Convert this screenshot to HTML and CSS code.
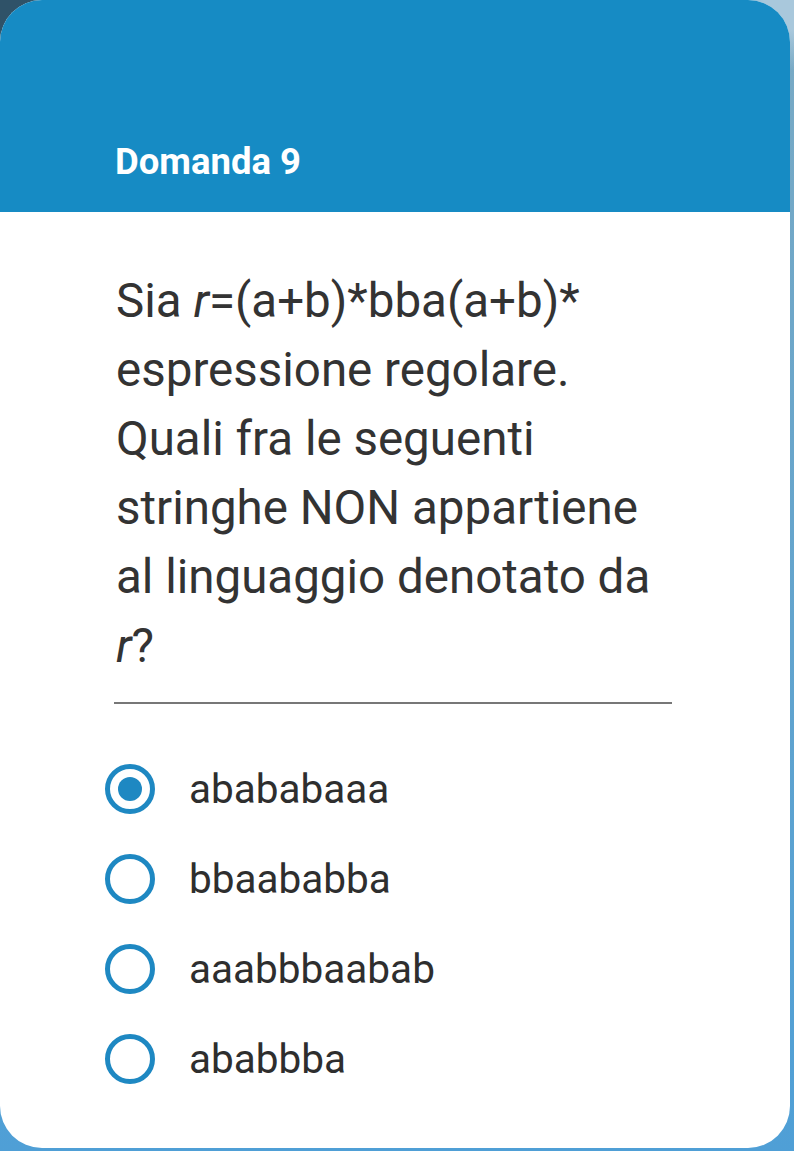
FILE: index.html
```html
<!DOCTYPE html>
<html lang="it">
<head>
<meta charset="utf-8">
<link rel="stylesheet" href="styles.css">
</head>
<body>
<div class="card">
  <div class="header"><h1 class="title">Domanda 9</h1></div>
  <div class="content">
    <p class="question">Sia <i>r</i>=(a+b)*bba(a+b)* espressione regolare. Quali fra le seguenti stringhe NON appartiene al linguaggio denotato da <i>r</i>?</p>
    <hr class="divider">
    <ul class="options">
      <li class="option"><span class="radio checked"></span><span class="label">abababaaa</span></li>
      <li class="option"><span class="radio"></span><span class="label">bbaababba</span></li>
      <li class="option"><span class="radio"></span><span class="label">aaabbbaabab</span></li>
      <li class="option"><span class="radio"></span><span class="label">ababbba</span></li>
    </ul>
  </div>
</div>
</body>
</html>
```
FILE: styles.css
```css
html, body {
  margin: 0;
  padding: 0;
  height: 100%;
}
body {
  background:
    radial-gradient(circle at 0 0, #2f5268 0, #2f5268 30px, rgba(47, 82, 104, 0) 60px),
    radial-gradient(circle at 100% 0, #a9c8dc 0, #a9c8dc 30px, rgba(169, 200, 220, 0) 70px),
    linear-gradient(180deg, #7aaac4 0%, #4f9fd6 100%);
  font-family: Roboto, "Noto Sans", sans-serif;
  overflow: hidden;
}
.card {
  box-sizing: border-box;
  height: 1148px;
  margin-right: 4px;
  background: #ffffff;
  border-radius: 42px;
  overflow: hidden;
}
.header {
  background: #168bc4;
  height: 212px;
  box-sizing: border-box;
  padding: 140px 0 0 115px;
}
.title {
  margin: 0;
  color: #ffffff;
  font-size: 36.5px;
  font-weight: 700;
  line-height: 44px;
}
.content {
  padding: 55px 120px 0 116px;
}
.question {
  margin: 0;
  color: #333333;
  font-size: 47.5px;
  line-height: 69px;
}
.divider {
  border: 0;
  height: 2px;
  background: #777777;
  margin: 21px 0 0 -2px;
  width: 558px;
}
.options {
  list-style: none;
  margin: 60px 0 0 -11px;
  padding: 0;
  display: flex;
  flex-direction: column;
  gap: 40px;
}
.option {
  display: flex;
  align-items: center;
  gap: 34px;
  height: 50px;
}
.radio {
  box-sizing: border-box;
  width: 50px;
  height: 50px;
  border: 5px solid #1e88c2;
  border-radius: 50%;
  display: flex;
  align-items: center;
  justify-content: center;
}
.radio.checked::after {
  content: "";
  width: 24px;
  height: 24px;
  border-radius: 50%;
  background: #1e88c2;
}
.label {
  color: #2e2e2e;
  font-size: 40.5px;
}
```
